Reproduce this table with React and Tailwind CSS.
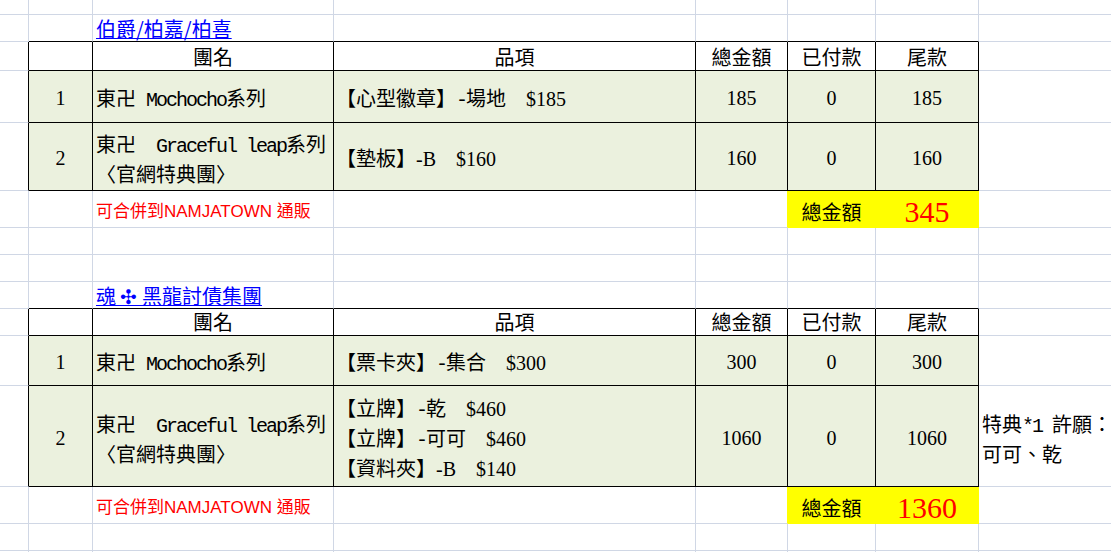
import React from "react";

// side borders: g = sheet gridline, k = table border, y = hidden under fill
const R = {
  g: "border-r border-r-[#d0d7e5]",
  k: "border-r border-r-black",
  y: "border-r border-r-[#ffff00]",
  n: "",
};
const B = {
  g: "border-b border-b-[#d0d7e5]",
  k: "border-b border-b-black",
  y: "border-b border-b-[#ffff00]",
};

function Cell({ r = "g", b = "g", className = "", children }) {
  return (
    <div className={`flex min-w-0 whitespace-pre ${R[r]} ${B[b]} ${className}`}>
      {children}
    </div>
  );
}

// half-width latin as the sheet font draws it
function Half({ children }) {
  return (
    <span className="font-['Liberation_Mono',monospace] tracking-[-2px]">
      {children}
    </span>
  );
}

function Num({ children }) {
  return <span className="font-['Liberation_Serif',serif]">{children}</span>;
}

function BlankRow() {
  return (
    <>
      <Cell />
      <Cell />
      <Cell />
      <Cell />
      <Cell />
      <Cell />
      <Cell />
      <Cell r="n" />
    </>
  );
}

const mid = "items-center pt-[4px] leading-[27px]";
const head = "items-end justify-center pb-[3px] leading-[20px]";
const green = "bg-[#ebf1de]";

function OrderBlock({ title, rows, total }) {
  return (
    <>
      {/* title row */}
      <Cell />
      <Cell b="k" />
      <Cell b="k" className="items-end pb-[2px] pl-[3px] leading-[20px]">
        <span className="text-[#0000ff] underline decoration-1">{title}</span>
      </Cell>
      <Cell b="k" />
      <Cell b="k" />
      <Cell b="k" />
      <Cell b="k" />
      <Cell r="n" />

      {/* header */}
      <Cell r="k" />
      <Cell r="k" b="k" />
      <Cell r="k" b="k" className={head}>團名</Cell>
      <Cell r="k" b="k" className={head}>品項</Cell>
      <Cell r="k" b="k" className={head}>總金額</Cell>
      <Cell r="k" b="k" className={head}>已付款</Cell>
      <Cell r="k" b="k" className={head}>尾款</Cell>
      <Cell r="n" />

      {rows.map((row) => (
        <React.Fragment key={row.no}>
          <Cell r="k" />
          <Cell r="k" b="k" className={`${mid} ${green} justify-center`}>
            <Num>{row.no}</Num>
          </Cell>
          <Cell r="k" b="k" className={`${mid} ${green} pl-[3px]`}>
            <div>{row.name}</div>
          </Cell>
          <Cell r="k" b="k" className={`${mid} ${green} pl-[2px]`}>
            <div>{row.items}</div>
          </Cell>
          <Cell r="k" b="k" className={`${mid} ${green} justify-center`}>
            <Num>{row.amount}</Num>
          </Cell>
          <Cell r="k" b="k" className={`${mid} ${green} justify-center`}>
            <Num>{row.paid}</Num>
          </Cell>
          <Cell r="k" b="k" className={`${mid} ${green} justify-center`}>
            <Num>{row.rest}</Num>
          </Cell>
          <Cell r="n" className={`${mid} pl-[3px]`}>
            {row.note && <div>{row.note}</div>}
          </Cell>
        </React.Fragment>
      ))}

      {/* total row */}
      <Cell />
      <Cell />
      <Cell className={`${mid} pl-[3px]`}>
        <span className="font-['Liberation_Sans','Noto_Sans_CJK_TC',sans-serif] text-[17px] text-[#ff0000]">
          可合併到NAMJATOWN 通販
        </span>
      </Cell>
      <Cell />
      <Cell r="y" />
      <Cell r="y" b="y" className={`${mid} justify-center bg-[#ffff00]`}>
        總金額
      </Cell>
      <Cell r="y" b="y" className={`${mid} justify-center bg-[#ffff00]`}>
        <span className="font-['Liberation_Serif',serif] text-[30px] text-[#ff0000]">
          {total}
        </span>
      </Cell>
      <Cell r="n" />
    </>
  );
}

const firstRows = [
  {
    no: 1,
    name: (
      <>
        東卍<Half> Mochocho</Half>系列
      </>
    ),
    items: (
      <>
        【心型徽章】<Half>-</Half>場地　<Num>$185</Num>
      </>
    ),
    amount: 185,
    paid: 0,
    rest: 185,
  },
  {
    no: 2,
    name: (
      <>
        東卍<Half>  Graceful leap</Half>系列
        <br />
        〈官網特典團〉
      </>
    ),
    items: (
      <>
        【墊板】<Num>-B</Num>　<Num>$160</Num>
      </>
    ),
    amount: 160,
    paid: 0,
    rest: 160,
  },
];

const secondRows = [
  {
    no: 1,
    name: (
      <>
        東卍<Half> Mochocho</Half>系列
      </>
    ),
    items: (
      <>
        【票卡夾】<Half>-</Half>集合　<Num>$300</Num>
      </>
    ),
    amount: 300,
    paid: 0,
    rest: 300,
  },
  {
    no: 2,
    name: (
      <>
        東卍<Half>  Graceful leap</Half>系列
        <br />
        〈官網特典團〉
      </>
    ),
    items: (
      <>
        【立牌】<Half>-</Half>乾　<Num>$460</Num>
        <br />
        【立牌】<Half>-</Half>可可　<Num>$460</Num>
        <br />
        【資料夾】<Num>-B</Num>　<Num>$140</Num>
      </>
    ),
    amount: 1060,
    paid: 0,
    rest: 1060,
    note: (
      <>
        特典<Half>*1 </Half>許願：
        <br />
        可可、乾
      </>
    ),
  },
];

export default function App() {
  return (
    <div className="h-[552px] w-[1111px] overflow-hidden bg-white">
      <div className="grid grid-cols-[29px_64px_241px_362px_92px_88px_103px_1fr] grid-rows-[15px_27px_29px_52px_68px_37px_27px_27px_27px_27px_50px_101px_37px_27px_27px] font-['Noto_Sans_CJK_TC',sans-serif] text-[20px] text-black">
        <BlankRow />
        <OrderBlock title="伯爵/柏嘉/柏喜" rows={firstRows} total={345} />
        <BlankRow />
        <BlankRow />
        <OrderBlock title="魂 ✣ 黑龍討債集團" rows={secondRows} total={1360} />
        <BlankRow />
        <BlankRow />
      </div>
    </div>
  );
}
